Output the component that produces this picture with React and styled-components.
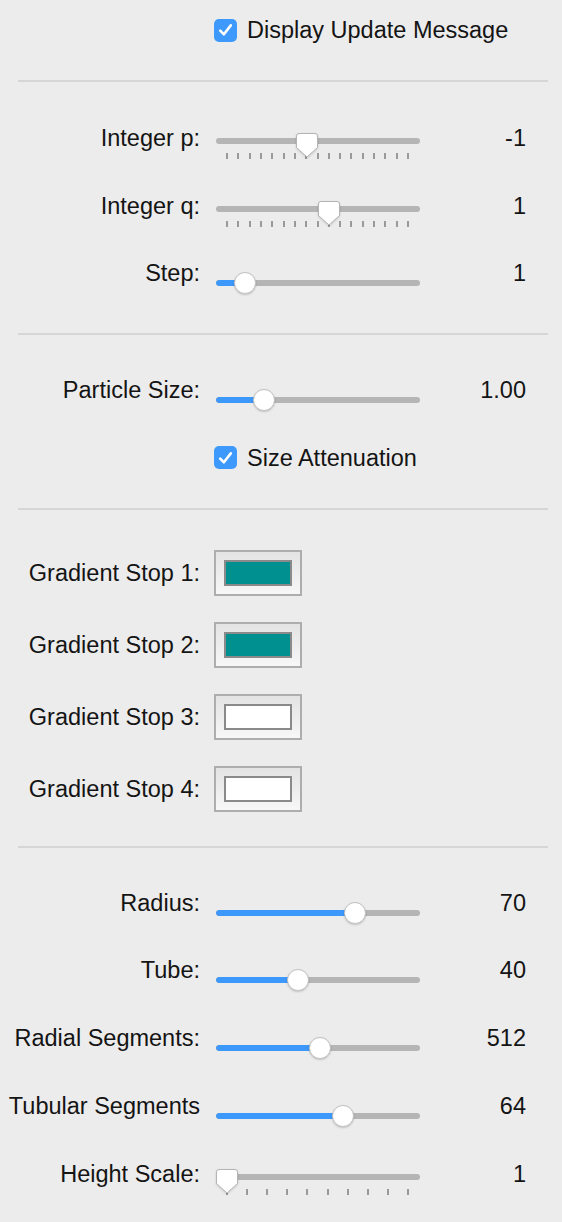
import React from "react";
import styled, { createGlobalStyle } from "styled-components";

const GlobalStyle = createGlobalStyle`
  html, body {
    margin: 0;
    padding: 0;
    background: #ececec;
  }
  body {
    font-family: "Liberation Sans", Arial, sans-serif;
    color: #141414;
  }
`;

const Panel = styled.div`
  width: 562px;
  min-height: 1222px;
  background: #ececec;
  font-size: 23.5px;
`;

const Section = styled.section`
  display: flex;
  flex-direction: column;
  gap: ${(p) => p.$gap || 0}px;
  padding: ${(p) => p.$top}px 0 ${(p) => p.$bottom}px;
`;

const Divider = styled.div`
  margin: 0 14px 0 18px;
  height: 2px;
  background: #d6d6d6;
`;

const Row = styled.div`
  display: grid;
  grid-template-columns: 200px 204px 1fr;
  column-gap: 16px;
  align-items: center;
  height: ${(p) => p.$h || 28}px;
`;

const Label = styled.div`
  text-align: right;
  line-height: 28px;
  white-space: nowrap;
`;

const Value = styled.div`
  text-align: right;
  padding-right: 36px;
  line-height: 28px;
`;

/* slider */
const SliderBox = styled.div`
  position: relative;
  align-self: start;
  height: 28px;
  display: flex;
  flex-direction: column;
  padding-top: ${(p) => (p.$ticked ? 14 : 21)}px;
  box-sizing: border-box;
`;

const Track = styled.div`
  position: relative;
  flex: none;
  height: 6px;
  border-radius: 3px;
  background: #b5b5b5;
  overflow: hidden;
`;

const Fill = styled.div`
  height: 100%;
  background: #3c98fb;
  border-radius: 3px 0 0 3px;
`;

const Ticks = styled.div`
  flex: none;
  display: flex;
  justify-content: space-between;
  margin: 9px 11px 0 10px;
`;

const Tick = styled.span`
  width: 2px;
  height: 6px;
  background: #9a9a9a;
`;

const Knob = styled.div`
  position: absolute;
  top: 13px;
  width: 22px;
  height: 22px;
  border-radius: 50%;
  background: #fff;
  border: 1px solid #c2c2c2;
  box-sizing: border-box;
  box-shadow: 0 1px 2px rgba(0, 0, 0, 0.18);
`;

const Pointer = styled.svg`
  position: absolute;
  top: 8px;
  filter: drop-shadow(0 1px 1px rgba(0, 0, 0, 0.15));
`;

const Slider = ({ frac, ticks }) => {
  const x = 11 + frac * 182;
  return (
    <SliderBox $ticked={!!ticks}>
      <Track>{!ticks && <Fill style={{ width: x }} />}</Track>
      {ticks && (
        <Ticks>
          {Array.from({ length: ticks }).map((_, i) => (
            <Tick key={i} />
          ))}
        </Ticks>
      )}
      {ticks ? (
        <Pointer width="24" height="27" viewBox="-1 -1 24 27" style={{ left: x - 12 }}>
          <path
            d="M3 0.5 H19 Q21.5 0.5 21.5 3 V14.5 L11 24 L0.5 14.5 V3 Q0.5 0.5 3 0.5 Z"
            fill="#fff"
            stroke="#b3b3b3"
            strokeWidth="1"
          />
        </Pointer>
      ) : (
        <Knob style={{ left: x - 11 }} />
      )}
    </SliderBox>
  );
};

/* checkbox */
const CheckWrap = styled.label`
  grid-column: 2 / 4;
  display: flex;
  align-items: center;
  gap: 10px;
  margin-left: -2px;
  line-height: 28px;
  white-space: nowrap;
`;

const Box = styled.span`
  width: 23px;
  height: 23px;
  border-radius: 5px;
  background: #3d9afc;
  display: flex;
  align-items: center;
  justify-content: center;
  flex: none;
`;

const Checkbox = ({ children }) => (
  <CheckWrap>
    <Box>
      <svg width="15" height="14" viewBox="0 0 15 14">
        <path
          d="M2.2 7.6 L5.9 11.3 L12.8 2.4"
          fill="none"
          stroke="#fff"
          strokeWidth="2.6"
          strokeLinecap="round"
          strokeLinejoin="round"
        />
      </svg>
    </Box>
    {children}
  </CheckWrap>
);

/* color well */
const Well = styled.div`
  width: 88px;
  height: 46px;
  margin-left: -2px;
  box-sizing: border-box;
  border: 2px solid #adadad;
  background: linear-gradient(#e3e3e3, #f7f7f7);
  padding: 8px;
`;

const Swatch = styled.div`
  height: 100%;
  box-sizing: border-box;
  border: 2px solid #8a8a8a;
  background: ${(p) => p.$color};
`;

const stops = ["#009090", "#009090", "#ffffff", "#ffffff"];

const lower = [
  { label: "Radius:", frac: 0.703, value: "70" },
  { label: "Tube:", frac: 0.39, value: "40" },
  { label: "Radial Segments:", frac: 0.511, value: "512" },
  { label: "Tubular Segments", frac: 0.637, value: "64" },
];

export default function App() {
  return (
    <Panel>
      <GlobalStyle />
      <Section $top={16} $bottom={36}>
        <Row>
          <Checkbox>Display Update Message</Checkbox>
        </Row>
      </Section>
      <Divider />
      <Section $top={42} $bottom={46} $gap={39.5}>
        <Row>
          <Label>Integer p:</Label>
          <Slider frac={7 / 16} ticks={17} />
          <Value>-1</Value>
        </Row>
        <Row>
          <Label>Integer q:</Label>
          <Slider frac={9 / 16} ticks={17} />
          <Value>1</Value>
        </Row>
        <Row>
          <Label>Step:</Label>
          <Slider frac={0.099} />
          <Value>1</Value>
        </Row>
      </Section>
      <Divider />
      <Section $top={41} $bottom={36.5} $gap={39.5}>
        <Row>
          <Label>Particle Size:</Label>
          <Slider frac={0.203} />
          <Value>1.00</Value>
        </Row>
        <Row>
          <Checkbox>Size Attenuation</Checkbox>
        </Row>
      </Section>
      <Divider />
      <Section $top={40} $bottom={34} $gap={26}>
        {stops.map((c, i) => (
          <Row key={i} $h={46}>
            <Label>Gradient Stop {i + 1}:</Label>
            <Well>
              <Swatch $color={c} />
            </Well>
          </Row>
        ))}
      </Section>
      <Divider />
      <Section $top={40.5} $bottom={30} $gap={39.75}>
        {lower.map((r) => (
          <Row key={r.label}>
            <Label>{r.label}</Label>
            <Slider frac={r.frac} />
            <Value>{r.value}</Value>
          </Row>
        ))}
        <Row>
          <Label>Height Scale:</Label>
          <Slider frac={0} ticks={10} />
          <Value>1</Value>
        </Row>
      </Section>
    </Panel>
  );
}
